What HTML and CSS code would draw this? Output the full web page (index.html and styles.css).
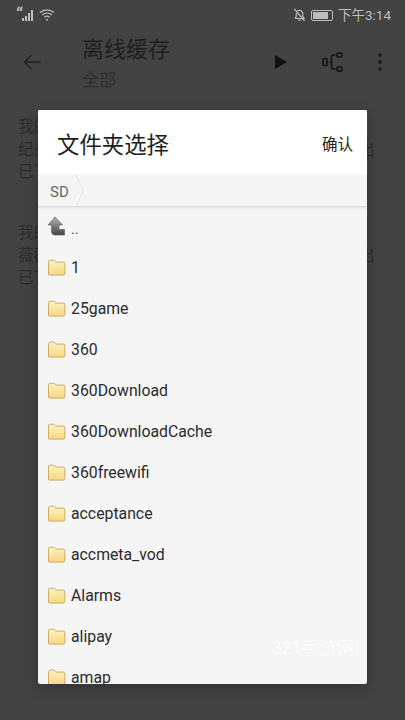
FILE: index.html
```html
<!DOCTYPE html>
<html lang="zh-CN">

<head>
    <meta charset="UTF-8">
    <meta name="viewport" content="width=device-width, initial-scale=1.0">
    <title>文件夹选择</title>

    <link rel="stylesheet" href="styles.css">
</head>

<body>
    <svg class="svg-defs" width="0" height="0">
        <defs>
            <linearGradient id="folder-fill" x1="0" y1="0" x2="0" y2="1">
                <stop offset="0" stop-color="#fdf3c4"/>
                <stop offset="1" stop-color="#f6d67c"/>
            </linearGradient>
            <linearGradient id="up-fill" x1="0" y1="0" x2="0" y2="1">
                <stop offset="0" stop-color="#b4b4b4"/>
                <stop offset="1" stop-color="#464646"/>
            </linearGradient>
            <symbol id="folder" viewBox="0 0 19 17">
                <path d="M1.5 15.5V2.6C1.5 1.7 2 1.2 2.9 1.2H6.6C7.3 1.2 7.7 1.5 8.1 2.1L8.8 3.1H16.4C17.3 3.1 17.9 3.7 17.9 4.6V14.6C17.9 15.5 17.3 16.1 16.4 16.1H2.2C1.8 16.1 1.5 15.9 1.5 15.5Z" fill="url(#folder-fill)" stroke="#c9ad66" stroke-width="1"/>
            </symbol>
        </defs>
    </svg>

    <div class="app">
        <div class="status-bar">
            <div class="status-left">
                <span class="sim-mark">“</span>
                <svg class="signal" width="14" height="14" viewBox="0 0 14 14">
                    <rect x="0" y="10" width="2" height="3" fill="#bdbdbd"/>
                    <rect x="3" y="8" width="2" height="5" fill="#bdbdbd"/>
                    <rect x="6" y="5" width="2" height="8" fill="#bdbdbd"/>
                    <rect x="9" y="2" width="2" height="11" fill="#bdbdbd"/>
                </svg>
                <svg class="wifi" width="16" height="14" viewBox="0 0 16 14" fill="none" stroke="#bdbdbd" stroke-width="1.3">
                    <path d="M1 4.6C5 .9 11 .9 15 4.6"/>
                    <path d="M3.2 7C6 4.5 10 4.5 12.8 7"/>
                    <path d="M5.4 9.3C6.9 8 9.1 8 10.6 9.3"/>
                    <circle cx="8" cy="11.8" r="1" fill="#bdbdbd" stroke="none"/>
                </svg>
            </div>
            <div class="status-right">
                <svg width="13" height="14" viewBox="0 0 13 14" fill="none" stroke="#bdbdbd" stroke-width="1.2">
                    <path d="M2 10.5H11L9.8 8.6V5.6C9.8 3.8 8.4 2.4 6.5 2.4C5.6 2.4 4.8 2.7 4.2 3.3M3.3 5V8.6L2 10.5"/>
                    <path d="M5.3 12.2H7.7"/>
                    <path d="M1.5 1L11.5 13"/>
                </svg>
                <div class="battery"><div class="battery-level"></div></div>
                <span class="clock">下午3:14</span>
            </div>
        </div>

        <div class="toolbar">
            <svg class="back" width="18" height="16" viewBox="0 0 18 16" fill="none" stroke="#222" stroke-width="1.4">
                <path d="M17.5 8H1.5M8.5 1L1.5 8L8.5 15"/>
            </svg>
            <div class="toolbar-title">
                <div class="title">离线缓存</div>
                <div class="subtitle">全部</div>
            </div>
            <svg class="play" width="14" height="16" viewBox="0 0 14 16">
                <path d="M1 1L13 8L1 15Z" fill="#111"/>
            </svg>
            <svg class="tree" width="22" height="20" viewBox="0 0 22 20" fill="none" stroke="#111" stroke-width="1.5">
                <rect x="1" y="6.5" width="4" height="7" rx="1"/>
                <path d="M13.5 3H11C10 3 9.5 3.5 9.5 4.5V15.5C9.5 16.5 10 17 11 17H13.5M7.5 10H9.5"/>
                <rect x="15" y="1" width="5" height="4" rx="1"/>
                <rect x="15" y="15" width="5" height="4" rx="1"/>
            </svg>
            <div class="more"><i></i><i></i><i></i></div>
        </div>

        <div class="log-list">
            <p>我的下载任务已经完成<br>纪录片合集一共十二集，全部已下载完成，请查看出<br>已下载</p>
            <p>我的下载任务已经完成<br>薇薇安的故事一共十二集，全部已下载完成，请看出<br>已下载</p>
        </div>
    </div>

    <div class="dialog">
        <div class="dialog-head">
            <h1>文件夹选择</h1>
            <span class="confirm">确认</span>
        </div>
        <div class="crumbs">
            <span class="crumb">SD</span>
            <svg class="crumb-arrow" width="10" height="31" viewBox="0 0 10 31" fill="none" stroke="#e2e2e2" stroke-width="1">
                <path d="M1 0L8.5 15.5L1 31"/>
            </svg>
        </div>
        <div class="folders">
            <div class="row">
                <svg class="row-icon up-icon" viewBox="0 0 19 20">
                    <path d="M8 1L1 9H4.5V15.5C4.5 17.7 5.7 19 7.8 19H17.5V13.5H12V9H15.5Z" fill="url(#up-fill)" stroke="#555" stroke-width=".6"/>
                </svg>
                <span class="row-name up-name">..</span>
            </div>
            <div class="row"><svg class="row-icon"><use href="#folder"/></svg><span class="row-name">1</span></div>
            <div class="row"><svg class="row-icon"><use href="#folder"/></svg><span class="row-name">25game</span></div>
            <div class="row"><svg class="row-icon"><use href="#folder"/></svg><span class="row-name">360</span></div>
            <div class="row"><svg class="row-icon"><use href="#folder"/></svg><span class="row-name">360Download</span></div>
            <div class="row"><svg class="row-icon"><use href="#folder"/></svg><span class="row-name">360DownloadCache</span></div>
            <div class="row"><svg class="row-icon"><use href="#folder"/></svg><span class="row-name">360freewifi</span></div>
            <div class="row"><svg class="row-icon"><use href="#folder"/></svg><span class="row-name">acceptance</span></div>
            <div class="row"><svg class="row-icon"><use href="#folder"/></svg><span class="row-name">accmeta_vod</span></div>
            <div class="row"><svg class="row-icon"><use href="#folder"/></svg><span class="row-name">Alarms</span></div>
            <div class="row"><svg class="row-icon"><use href="#folder"/></svg><span class="row-name">alipay</span></div>
            <div class="row"><svg class="row-icon"><use href="#folder"/></svg><span class="row-name">amap</span></div>
        </div>
        <span class="watermark">321手游网</span>
    </div>
</body>

</html>
```

FILE: styles.css
```css
body {
    font-family: Roboto, "Noto Sans CJK SC", sans-serif;
    background-color: #434343;
    margin: 0;
    padding: 0;
    width: 405px;
    height: 720px;
    overflow: hidden;
    position: relative;
}

.svg-defs {
    position: absolute;
}

/* page behind the dialog */
.app {
    display: flex;
    flex-direction: column;
}

.status-bar {
    height: 30px;
    padding: 0 14px 0 16px;
    display: flex;
    justify-content: space-between;
    align-items: center;
    color: #bdbdbd;
}

.status-left,
.status-right {
    display: flex;
    align-items: center;
}

.sim-mark {
    font-size: 18px;
    font-weight: bold;
    line-height: 18px;
    height: 18px;
    width: 7px;
}

.signal {
    margin-right: 3px;
    margin-left: -1px;
}

.battery {
    width: 22px;
    height: 11px;
    margin: 0 5px 0 5px;
    padding: 1px;
    border: 1px solid #bdbdbd;
    border-radius: 2px;
    box-sizing: border-box;
}

.battery-level {
    width: 15px;
    height: 100%;
    background-color: #bdbdbd;
}

.clock {
    font-size: 13.5px;
    line-height: 16px;
}

.toolbar {
    height: 64px;
    display: flex;
    align-items: center;
    padding-left: 23px;
}

.back {
    margin-right: 41px;
    flex-shrink: 0;
}

.toolbar-title {
    width: 190px;
    margin-top: 6px;
}

.title {
    font-size: 22px;
    line-height: 30px;
    color: #1f1f1f;
}

.subtitle {
    font-size: 17px;
    line-height: 30px;
    color: #2f2f2f;
}

.play {
    margin-left: 2px;
    margin-right: 34px;
}

.tree {
    margin-right: 34px;
}

.more {
    display: flex;
    flex-direction: column;
    gap: 3px;
}

.more i {
    display: block;
    width: 4px;
    height: 4px;
    border-radius: 50%;
    background-color: #222;
}

.log-list {
    padding: 22px 0 0 18px;
    width: 357px;
}

.log-list p {
    margin: 0 0 38.5px;
    font-size: 15.5px;
    line-height: 22.5px;
    color: #2c2c2c;
    white-space: nowrap;
    overflow: hidden;
}

/* dialog on top */
.dialog {
    position: absolute;
    left: 38px;
    top: 110px;
    width: 329px;
    height: 574px;
    background-color: #f6f5f6;
    border-radius: 2px;
    box-shadow: 0 4px 14px rgba(0, 0, 0, 0.25);
    overflow: hidden;
    display: flex;
    flex-direction: column;
}

.dialog-head {
    height: 65px;
    flex-shrink: 0;
    background-color: #ffffff;
    display: flex;
    justify-content: space-between;
    align-items: center;
    padding: 0 14px 0 19px;
    box-sizing: border-box;
}

.dialog-head h1 {
    margin: 0;
    font-size: 22.4px;
    font-weight: normal;
    color: #1e1e1e;
}

.confirm {
    font-size: 15.5px;
    color: #222222;
}

.crumbs {
    height: 31px;
    flex-shrink: 0;
    background-color: #f5f5f5;
    display: flex;
    align-items: center;
    padding-left: 12px;
    box-shadow: 0 1px 3px rgba(0, 0, 0, 0.15);
    position: relative;
}

.crumb {
    font-size: 15px;
    color: #666666;
    padding-top: 3px;
}

.crumb-arrow {
    margin-left: 6px;
}

.row {
    height: 41px;
    display: flex;
    align-items: center;
    padding-left: 9px;
}

.row-icon {
    width: 19px;
    height: 17px;
    margin-right: 5px;
    flex-shrink: 0;
}

.up-icon {
    height: 20px;
    margin-top: -1px;
}

.row-name {
    font-size: 15.8px;
    color: #2b2b2b;
}

.up-name {
    font-size: 14px;
    color: #444444;
    margin-top: 4px;
}

.watermark {
    position: absolute;
    left: 234px;
    top: 524px;
    font-size: 17.5px;
    color: rgba(255, 255, 255, 0.65);
}
```
